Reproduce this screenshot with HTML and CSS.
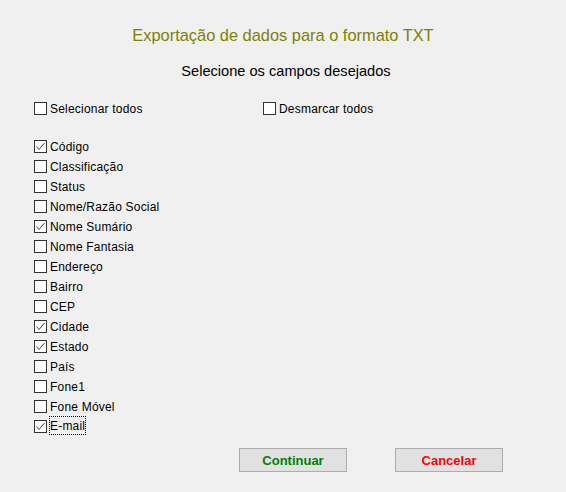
FILE: index.html
```html
<!DOCTYPE html>
<html lang="pt-BR">
<head>
<meta charset="utf-8">
<title>Exportação TXT</title>
<link rel="stylesheet" href="styles.css">
</head>
<body>
<div class="dialog">
  <h1 class="title">Exportação de dados para o formato TXT</h1>
  <h2 class="subtitle">Selecione os campos desejados</h2>

  <div class="toprow">
    <div class="row wide"><span class="box"></span><span class="lbl">Selecionar todos</span></div>
    <div class="row"><span class="box"></span><span class="lbl">Desmarcar todos</span></div>
  </div>

  <div class="list">
    <div class="row"><span class="box"><svg viewBox="0 0 11 11" width="11" height="11"><path d="M1.5 5.5 L4 8.5 L9.5 2" /></svg></span><span class="lbl">Código</span></div>
    <div class="row"><span class="box"></span><span class="lbl">Classificação</span></div>
    <div class="row"><span class="box"></span><span class="lbl">Status</span></div>
    <div class="row"><span class="box"></span><span class="lbl">Nome/Razão Social</span></div>
    <div class="row"><span class="box"><svg viewBox="0 0 11 11" width="11" height="11"><path d="M1.5 5.5 L4 8.5 L9.5 2" /></svg></span><span class="lbl">Nome Sumário</span></div>
    <div class="row"><span class="box"></span><span class="lbl">Nome Fantasia</span></div>
    <div class="row"><span class="box"></span><span class="lbl">Endereço</span></div>
    <div class="row"><span class="box"></span><span class="lbl">Bairro</span></div>
    <div class="row"><span class="box"></span><span class="lbl">CEP</span></div>
    <div class="row"><span class="box"><svg viewBox="0 0 11 11" width="11" height="11"><path d="M1.5 5.5 L4 8.5 L9.5 2" /></svg></span><span class="lbl">Cidade</span></div>
    <div class="row"><span class="box"><svg viewBox="0 0 11 11" width="11" height="11"><path d="M1.5 5.5 L4 8.5 L9.5 2" /></svg></span><span class="lbl">Estado</span></div>
    <div class="row"><span class="box"></span><span class="lbl">País</span></div>
    <div class="row"><span class="box"></span><span class="lbl">Fone1</span></div>
    <div class="row"><span class="box"></span><span class="lbl">Fone Móvel</span></div>
    <div class="row"><span class="box"><svg viewBox="0 0 11 11" width="11" height="11"><path d="M1.5 5.5 L4 8.5 L9.5 2" /></svg></span><span class="lbl focus">E-mail</span></div>
  </div>

  <div class="buttons">
    <button class="btn ok">Continuar</button>
    <button class="btn cancel">Cancelar</button>
  </div>
</div>
</body>
</html>
```

FILE: styles.css
```css
html, body {
  margin: 0;
  padding: 0;
  background: #f0f0f0;
}
body {
  font-family: "Liberation Sans", Arial, sans-serif;
  color: #000;
}
.dialog {
  width: 566px;
  height: 492px;
  display: flex;
  flex-direction: column;
}
.title {
  margin: 25px 0 0 0;
  font-size: 16.4px;
  line-height: 20px;
  font-weight: normal;
  color: #808000;
  text-align: center;
}
.subtitle {
  margin: 17px 0 0 6px;
  font-size: 14.6px;
  line-height: 18px;
  font-weight: normal;
  color: #000;
  text-align: center;
}
.toprow {
  display: flex;
  margin: 18px 0 0 34px;
}
.wide {
  width: 229px;
}
.list {
  display: flex;
  flex-direction: column;
  margin: 18px 0 0 34px;
}
.row {
  display: flex;
  align-items: flex-start;
  height: 20px;
  font-size: 12px;
  letter-spacing: 0.2px;
}
.box {
  box-sizing: border-box;
  width: 13px;
  height: 13px;
  margin-top: 4px;
  border: 1px solid #333;
  background: #fff;
  display: flex;
}
.box svg {
  fill: none;
  stroke: #444;
  stroke-width: 1;
}
.lbl {
  margin-left: 3px;
  padding-top: 1px;
  line-height: 20px;
}
.focus {
  margin-left: 2px;
  padding: 1px 1px 0 1px;
  line-height: 18px;
  margin-top: 0;
  outline: 1px dotted #000;
  outline-offset: -1px;
}
.buttons {
  display: flex;
  gap: 48px;
  margin: 12px 0 0 239px;
}
.btn {
  width: 108px;
  height: 24px;
  box-sizing: border-box;
  border: 1px solid #adadad;
  background: #e1e1e1;
  font-family: "Liberation Sans", Arial, sans-serif;
  font-size: 13px;
  font-weight: bold;
  padding: 0;
}
.ok {
  color: #008000;
}
.cancel {
  color: #ff0000;
}
```
